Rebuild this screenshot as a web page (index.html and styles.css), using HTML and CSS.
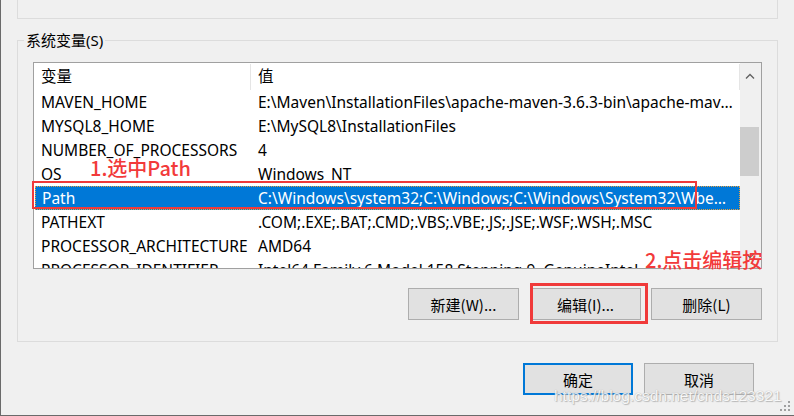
FILE: index.html
```html
<!DOCTYPE html>
<html lang="zh-CN">
<head>
<meta charset="utf-8">
<title>系统变量</title>
<link rel="stylesheet" href="styles.css">
</head>
<body>
<div class="window">
  <div class="top-group"></div>
  <fieldset class="group">
    <legend class="legend">系统变量(S)</legend>
    <div class="listbox">
      <div class="list">
        <div class="row header"><span class="c1">变量</span><span class="c2">值</span></div>
        <div class="row"><span class="c1">MAVEN_HOME</span><span class="c2">E:\Maven\InstallationFiles\apache-maven-3.6.3-bin\apache-maven-3.6.3</span></div>
        <div class="row"><span class="c1">MYSQL8_HOME</span><span class="c2">E:\MySQL8\InstallationFiles</span></div>
        <div class="row"><span class="c1">NUMBER_OF_PROCESSORS</span><span class="c2">4</span></div>
        <div class="row"><span class="c1">OS</span><span class="c2">Windows_NT</span></div>
        <div class="row selected"><span class="c1">Path</span><span class="c2">C:\Windows\system32;C:\Windows;C:\Windows\System32\Wbem;C:\Windows\System32\WindowsPowerShell</span></div>
        <div class="row"><span class="c1">PATHEXT</span><span class="c2">.COM;.EXE;.BAT;.CMD;.VBS;.VBE;.JS;.JSE;.WSF;.WSH;.MSC</span></div>
        <div class="row"><span class="c1">PROCESSOR_ARCHITECTURE</span><span class="c2">AMD64</span></div>
        <div class="row"><span class="c1">PROCESSOR_IDENTIFIER</span><span class="c2">Intel64 Family 6 Model 158 Stepping 9, GenuineIntel</span></div>
      </div>
      <div class="scrollbar">
        <div class="sb-btn">
          <svg width="10" height="6" viewBox="0 0 10 6"><path d="M1 5.5 L5 1.5 L9 5.5" fill="none" stroke="#606060" stroke-width="1.3"/></svg>
        </div>
        <div class="sb-track">
          <div class="sb-thumb"></div>
        </div>
        <div class="sb-btn down">
          <svg width="10" height="6" viewBox="0 0 10 6"><path d="M1 0.5 L5 4.5 L9 0.5" fill="none" stroke="#606060" stroke-width="1.3"/></svg>
        </div>
      </div>
    </div>
    <div class="btn-row">
      <button class="btn">新建(W)...</button>
      <button class="btn">编辑(I)...</button>
      <button class="btn">删除(L)</button>
    </div>
  </fieldset>
  <div class="dialog-row">
    <button class="btn default">确定</button>
    <button class="btn">取消</button>
  </div>

  <div class="note note1">1.选中Path</div>
  <div class="mark mark1"></div>
  <div class="note note2">2.点击编辑按</div>
  <div class="mark mark2"></div>
  <div class="watermark">https://blog.csdn.net/cnds123321</div>
  <svg class="grip" width="12" height="12" viewBox="0 0 12 12">
    <g fill="#a0a0a0">
      <rect x="9" y="1" width="2" height="2"/>
      <rect x="5" y="5" width="2" height="2"/><rect x="9" y="5" width="2" height="2"/>
      <rect x="1" y="9" width="2" height="2"/><rect x="5" y="9" width="2" height="2"/><rect x="9" y="9" width="2" height="2"/>
    </g>
  </svg>
</div>
</body>
</html>
```
FILE: styles.css
```css
* { box-sizing: border-box; }
html, body { margin: 0; padding: 0; }
body {
  background: #f0f0f0;
  font-family: "Noto Sans", "Noto Sans CJK SC", sans-serif;
  font-size: 15px;
  color: #000;
}
.window {
  position: relative;
  width: 794px;
  height: 416px;
  border-left: 1px solid #6a6a6a;
  border-bottom: 1px solid #6a6a6a;
  overflow: hidden;
}
.top-group {
  margin-left: 16px;
  width: 761px;
  height: 19px;
  border: 1px solid #dcdcdc;
  border-top: none;
}
.group {
  margin: 11px 0 0 16px;
  width: 761px;
  padding: 0 15px 21px 15px;
  border: 1px solid #dcdcdc;
  min-width: 0;
}
.legend {
  margin-left: -9px;
  padding: 0 2px;
  line-height: 20px;
  font-size: 15px;
}
.listbox {
  margin-top: 12px;
  width: 729px;
  height: 207px;
  border: 1px solid #a0a0a0;
  background: #fff;
  display: flex;
  overflow: hidden;
  font-size: 15.5px;
}
.list {
  flex: 1;
  min-width: 0;
  display: flex;
  flex-direction: column;
}
.row {
  display: flex;
  height: 24px;
  line-height: 24px;
  flex: none;
  white-space: nowrap;
}
.row.header {
  height: 27px;
  line-height: 27px;
}
.row.header .c1 { border-right: 1px solid #e5e5e5; }
.row.header .c1, .row.header .c2 { height: 26px; margin-top: 1px; line-height: 25px; }
.c1 {
  width: 217px;
  flex: none;
  padding-left: 7px;
  overflow: hidden;
}
.c2 {
  flex: 1;
  min-width: 0;
  padding-left: 7px;
  padding-right: 6px;
  overflow: hidden;
  text-overflow: ellipsis;
}
.row.header .c2 { border-right: 1px solid #e5e5e5; }
.row.selected {
  margin-left: 1px;
  background: #0078d7;
  color: #fff;
  outline: 1px dotted #e8a040;
  outline-offset: -1px;
}
.row.selected .c1 { width: 216px; }
.scrollbar {
  width: 21px;
  flex: none;
  background: #f0f0f0;
  display: flex;
  flex-direction: column;
}
.sb-btn {
  height: 25px;
  display: flex;
  align-items: center;
  justify-content: center;
  padding-right: 2px;
}
.sb-track {
  flex: 1;
  padding-top: 39px;
}
.sb-thumb {
  width: 19px;
  height: 49px;
  background: #cdcdcd;
}
.btn-row {
  margin-top: 19px;
  display: flex;
  justify-content: flex-end;
  gap: 11px;
}
.btn {
  width: 111px;
  height: 32px;
  background: #e1e1e1;
  border: 1px solid #adadad;
  font-family: "Noto Sans CJK SC", "Noto Sans", sans-serif;
  font-size: 15px;
  color: #000;
  padding: 0;
  margin: 0;
}
.btn-row .btn:last-child { margin-left: -1px; }
.dialog-row {
  margin-top: 21px;
  display: flex;
  justify-content: flex-end;
  gap: 11px;
  padding-right: 40px;
}
.dialog-row .btn { width: 110px; }
.btn.default { border: 2px solid #0078d7; }
.note {
  position: absolute;
  font-family: "Noto Sans CJK SC", sans-serif;
  font-size: 20px;
  font-weight: 500;
  line-height: 24px;
  color: #f23a3a;
}
.note1 { left: 89px; top: 156px; }
.note2 { left: 644px; top: 248px; }
.mark {
  position: absolute;
  border-style: solid;
  border-color: #f03a3a;
}
.mark1 { left: 31px; top: 181px; width: 665px; height: 28px; border-width: 2px; }
.mark2 { left: 529px; top: 283px; width: 118px; height: 41px; border-width: 3px; }
.watermark {
  position: absolute;
  left: 553px;
  top: 387px;
  font-family: "Liberation Sans", sans-serif;
  font-size: 15.5px;
  color: #fafafa;
  text-shadow: 0 0 1px #9a9a9a, 1px 1px 1px #b0b0b0;
  opacity: 0.85;
}
.grip {
  position: absolute;
  right: 3px;
  bottom: 3px;
}
```
